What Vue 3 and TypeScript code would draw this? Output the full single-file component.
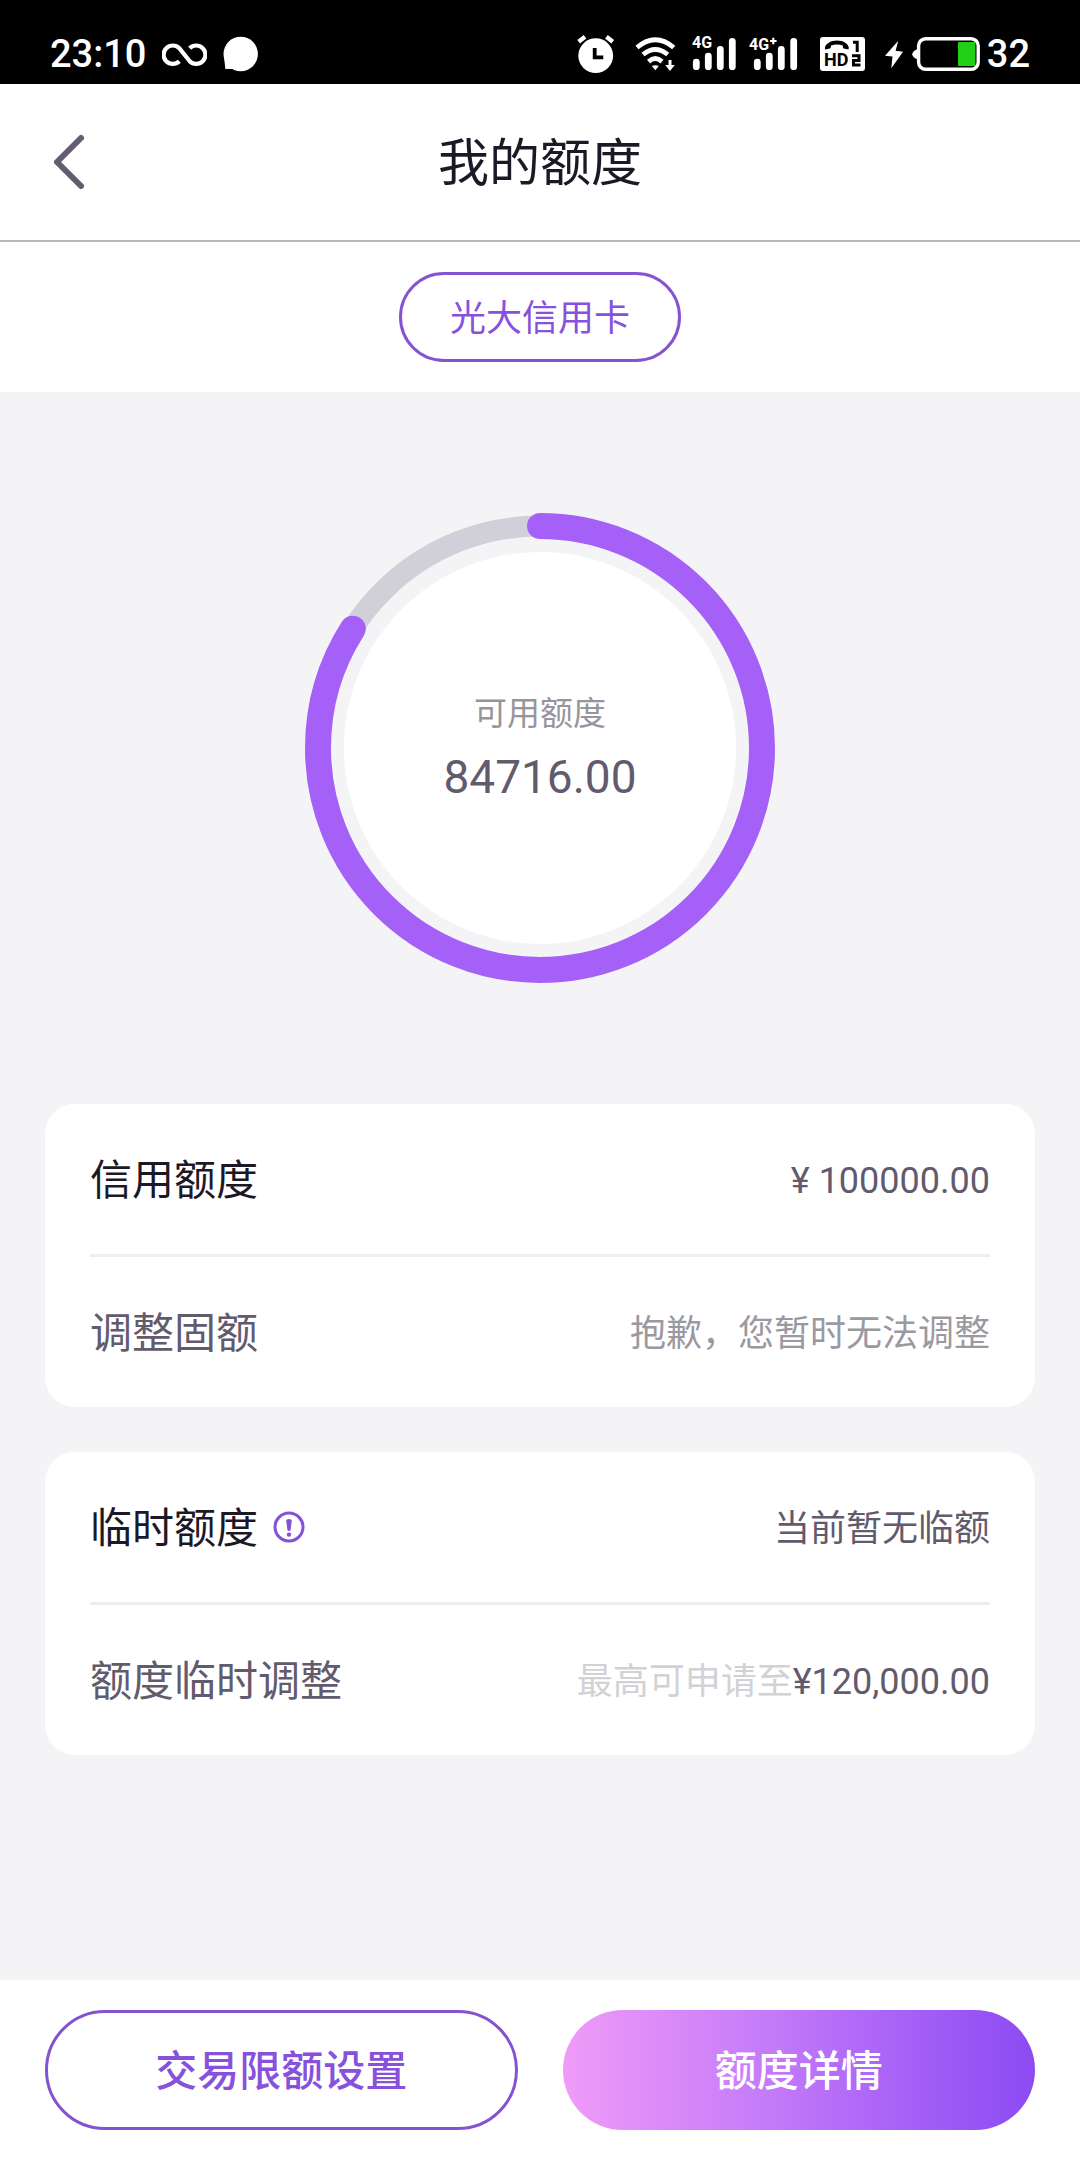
<script setup lang="ts">
import { computed, ref } from 'vue'

interface Row {
  label: string
  value: string
  hint?: string
  primary: boolean
  muted?: boolean
  info?: boolean
}

const available = ref('84716.00')
const usedRatio = ref(0.84)

const radius = 222
const circumference = 2 * Math.PI * radius
const dash = computed(() => `${circumference * usedRatio.value} ${circumference}`)

const cards: Row[][] = [
  [
    { label: '信用额度', value: '¥ 100000.00', primary: true },
    { label: '调整固额', value: '抱歉，您暂时无法调整', primary: false, muted: true },
  ],
  [
    { label: '临时额度', value: '当前暂无临额', primary: true, info: true },
    { label: '额度临时调整', hint: '最高可申请至', value: '¥120,000.00', primary: false },
  ],
]
</script>

<template>
  <div class="page">
    <div class="status">
      <div class="status-left">
        <span class="clock">23:10</span>
        <svg width="45" height="40" viewBox="0 0 45 40" aria-hidden="true">
          <path d="M17.3 27.2A9.2 9.2 0 1 1 17.3 14.2L27.7 27.2A9.2 9.2 0 1 0 27.7 14.2" fill="none" stroke="#fff" stroke-width="4.2" />
        </svg>
        <svg width="36" height="40" viewBox="0 0 36 40" aria-hidden="true">
          <circle cx="17.7" cy="20" r="17.2" fill="#fff" />
          <path d="M1 22L2.3 35H14Z" fill="#fff" />
        </svg>
      </div>
      <div class="status-right">
        <svg width="44" height="40" viewBox="0 0 44 40" aria-hidden="true">
          <circle cx="18.7" cy="21.7" r="17.4" fill="#fff" />
          <path d="M1.7 7.7L8 2.7M29.4 2.7L35.7 7.7" stroke="#fff" stroke-width="4.4" />
          <path d="M17.7 14V23.3H26.3" fill="none" stroke="#000" stroke-width="3.8" />
        </svg>
        <svg width="50" height="40" viewBox="0 0 50 40" aria-hidden="true">
          <g fill="none" stroke="#fff" stroke-width="4.8">
            <path d="M6 13.5Q24.3 -2 42.7 13.5" />
            <path d="M12 20.5Q24.3 10.4 36.7 20.5" />
            <path d="M17.6 27.6Q24.3 21.6 31 27.6" />
            <path d="M39 26V33" stroke-width="3" />
          </g>
          <path d="M20.8 31.9Q24.3 30.6 27.8 31.9L24.3 36.2ZM34.2 31H43.8L39 37Z" fill="#fff" />
        </svg>
        <svg width="48" height="40" viewBox="0 0 48 40" aria-hidden="true">
          <path d="M5.3 28.2V32.7M17.3 22.2V32.7M29.3 15.5V32.7M41.3 7.3V32.7" stroke="#fff" stroke-width="6.8" stroke-linecap="round" />
          <text class="glyph" x="1" y="14" fill="#fff">4G</text>
        </svg>
        <svg width="54" height="40" viewBox="0 0 54 40" aria-hidden="true">
          <path d="M8.3 28.2V32.7M20.3 22.2V32.7M32.3 15.5V32.7M44.7 7.3V32.7" stroke="#fff" stroke-width="6.8" stroke-linecap="round" />
          <text class="glyph" x="0" y="16" fill="#fff">4G</text>
          <path d="M21 7H27.6M24.3 3.7V10.3" stroke="#fff" stroke-width="2.2" />
        </svg>
        <svg width="59" height="40" viewBox="0 0 59 40" aria-hidden="true">
          <rect x="7" y="3" width="45" height="34" rx="3" fill="#fff" />
          <path d="M12 15.4C11 10 18 6.6 24 6.6S37 10 35.6 15.4L30.6 14.6Q29.6 14 29.8 11.6Q24 9.6 18 11.6Q18 14 17 14.6Z" fill="#000" />
          <text class="hd" x="11" y="32" fill="#000">HD</text>
          <g fill="none" stroke="#000" stroke-width="3">
            <path d="M40 8.2H44.2V18" />
            <path d="M39 21.8H46V26.4H40.5V31H47.5" />
          </g>
        </svg>
        <svg width="20" height="40" viewBox="0 0 20 40" class="bolt" aria-hidden="true">
          <path d="M16.3 6.7L3 21.7L10.5 22.6L9.3 34.3L21 17.7L13.6 16.7Z" fill="#fff" />
        </svg>
        <div class="battery">
          <svg width="69" height="40" viewBox="0 0 69 40" aria-hidden="true">
            <rect x="6.6" y="4.7" width="59.6" height="30.6" rx="7" fill="none" stroke="#fff" stroke-width="3.4" />
            <path d="M6 15Q.3 17 .3 20.3T6 25.6Z" fill="#fff" />
            <rect x="46" y="8" width="17.4" height="24" rx="1" fill="#22cf17" />
          </svg>
          <span class="clock">32</span>
        </div>
      </div>
    </div>

    <header class="header">
      <button class="back" type="button" aria-label="返回">
        <svg width="36" height="60" viewBox="0 0 36 60" aria-hidden="true">
          <path d="M31 6L7 30L31 54" fill="none" stroke="#655c70" stroke-width="6" stroke-linecap="round" stroke-linejoin="round" />
        </svg>
      </button>
      <h1 class="title">我的额度</h1>
    </header>

    <div class="tabs">
      <button class="chip" type="button">光大信用卡</button>
    </div>

    <main class="main">
      <div class="gauge">
        <svg class="ring" viewBox="0 0 470 470" aria-hidden="true">
          <circle cx="235" cy="235" r="196" fill="#fff" />
          <circle cx="235" cy="235" :r="radius" fill="none" stroke="#d1cfd7" stroke-width="21" />
          <circle
            cx="235" cy="235" :r="radius" fill="none" stroke="#a560f7" stroke-width="26"
            stroke-linecap="round" :stroke-dasharray="dash" transform="rotate(-90 235 235)"
          />
        </svg>
        <div class="reading">
          <span class="reading-label">可用额度</span>
          <span class="reading-value">{{ available }}</span>
        </div>
      </div>

      <section v-for="(rows, i) in cards" :key="i" class="card">
        <div v-for="row in rows" :key="row.label" class="row">
          <div class="label" :class="{ primary: row.primary }">
            <span>{{ row.label }}</span>
            <button v-if="row.info" class="info" type="button" aria-label="说明">
              <svg width="32" height="32" viewBox="0 0 32 32" aria-hidden="true">
                <circle cx="16" cy="16" r="14" fill="none" stroke="#8551d8" stroke-width="3" />
                <path d="M13.2 9.6Q13.2 8 16 8T18.8 9.6L17.6 19Q17 20 16 20T14.4 19Z" fill="#8551d8" />
                <circle cx="16" cy="23.6" r="2.2" fill="#8551d8" />
              </svg>
            </button>
          </div>
          <div class="value" :class="{ muted: row.muted }">
            <span v-if="row.hint" class="hint">{{ row.hint }}</span><span>{{ row.value }}</span>
          </div>
        </div>
      </section>
    </main>

    <footer class="footer">
      <button class="action outline" type="button">交易限额设置</button>
      <button class="action solid" type="button">额度详情</button>
    </footer>
  </div>
</template>

<style>
body {
  margin: 0;
  background: #f4f4f6;
}
</style>

<style scoped>
.page {
  display: flex;
  flex-direction: column;
  min-height: 100vh;
  background: #f4f4f6;
  color: #625a6d;
  font-family: Roboto, "Noto Sans CJK SC", sans-serif;
}

.page * {
  box-sizing: border-box;
}

svg {
  display: block;
  flex: none;
}

button {
  margin: 0;
  padding: 0;
  border: 0;
  background: none;
  color: inherit;
  font: inherit;
  cursor: pointer;
}

.status {
  display: flex;
  justify-content: space-between;
  align-items: center;
  height: 84px;
  padding: 24px 50px 0;
  background: #000;
  color: #fff;
}

.status-left {
  display: flex;
  align-items: center;
  gap: 16px;
}

.status-right {
  display: flex;
  align-items: center;
  gap: 10px;
}

.battery {
  display: flex;
  align-items: center;
  gap: 6px;
}

.bolt {
  overflow: visible;
}

.clock {
  font-size: 38px;
  line-height: 40px;
  font-weight: 500;
}

.glyph {
  font-size: 16px;
  font-weight: 700;
}

.hd {
  font-size: 18px;
  font-weight: 700;
}

.header {
  display: grid;
  grid-template-columns: 1fr auto 1fr;
  align-items: center;
  height: 158px;
  padding: 0 50px;
  border-bottom: 2px solid #b5b8b7;
  background: #fff;
}

.back {
  justify-self: start;
}

.title {
  margin: 0;
  padding-top: 4px;
  color: #1c1826;
  font-size: 51px;
  line-height: 60px;
  font-weight: 400;
}

.tabs {
  display: flex;
  justify-content: center;
  padding: 30px 45px;
  background: #fff;
}

.chip {
  height: 90px;
  padding: 4px 48px 0;
  border: 3px solid #8653d0;
  border-radius: 45px;
  color: #8851dc;
  font-size: 36px;
  line-height: 48px;
}

.main {
  flex: 1;
  padding: 121px 45px 45px;
}

.gauge {
  display: grid;
  place-items: center;
  width: 470px;
  margin: 0 auto 121px;
}

.ring,
.reading {
  grid-area: 1 / 1;
}

.ring {
  width: 100%;
}

.reading {
  display: flex;
  flex-direction: column;
  align-items: center;
  gap: 9px;
}

.reading-label {
  color: #97959c;
  font-size: 33px;
  line-height: 48px;
}

.reading-value {
  font-size: 46px;
  line-height: 60px;
}

.card {
  padding: 0 45px;
  border-radius: 30px;
  background: #fff;
}

.card + .card {
  margin-top: 45px;
}

.row {
  display: flex;
  justify-content: space-between;
  align-items: center;
  min-height: 150px;
}

.row + .row {
  min-height: 153px;
  border-top: 3px solid #eeeeef;
}

.label {
  display: flex;
  align-items: center;
  gap: 15px;
  font-size: 42px;
  line-height: 60px;
}

.label span,
.value {
  padding-top: 4px;
}

.primary {
  color: #1c1826;
}

.value {
  font-size: 36px;
  line-height: 48px;
}

.muted {
  color: #9b99a0;
}

.hint {
  color: #d2d2d5;
}

.footer {
  display: grid;
  grid-template-columns: 1fr 1fr;
  gap: 45px;
  padding: 30px 45px;
  background: #fff;
}

.action {
  height: 120px;
  padding-top: 4px;
  border-radius: 60px;
  font-size: 42px;
  line-height: 60px;
  font-weight: 500;
}

.outline {
  border: 3px solid #8653d0;
  color: #8851dc;
}

.solid {
  background: linear-gradient(90deg, #f09bf8, #c87df9 40%, #a963f7 70%, #8c4af2);
  color: #fff;
}
</style>
